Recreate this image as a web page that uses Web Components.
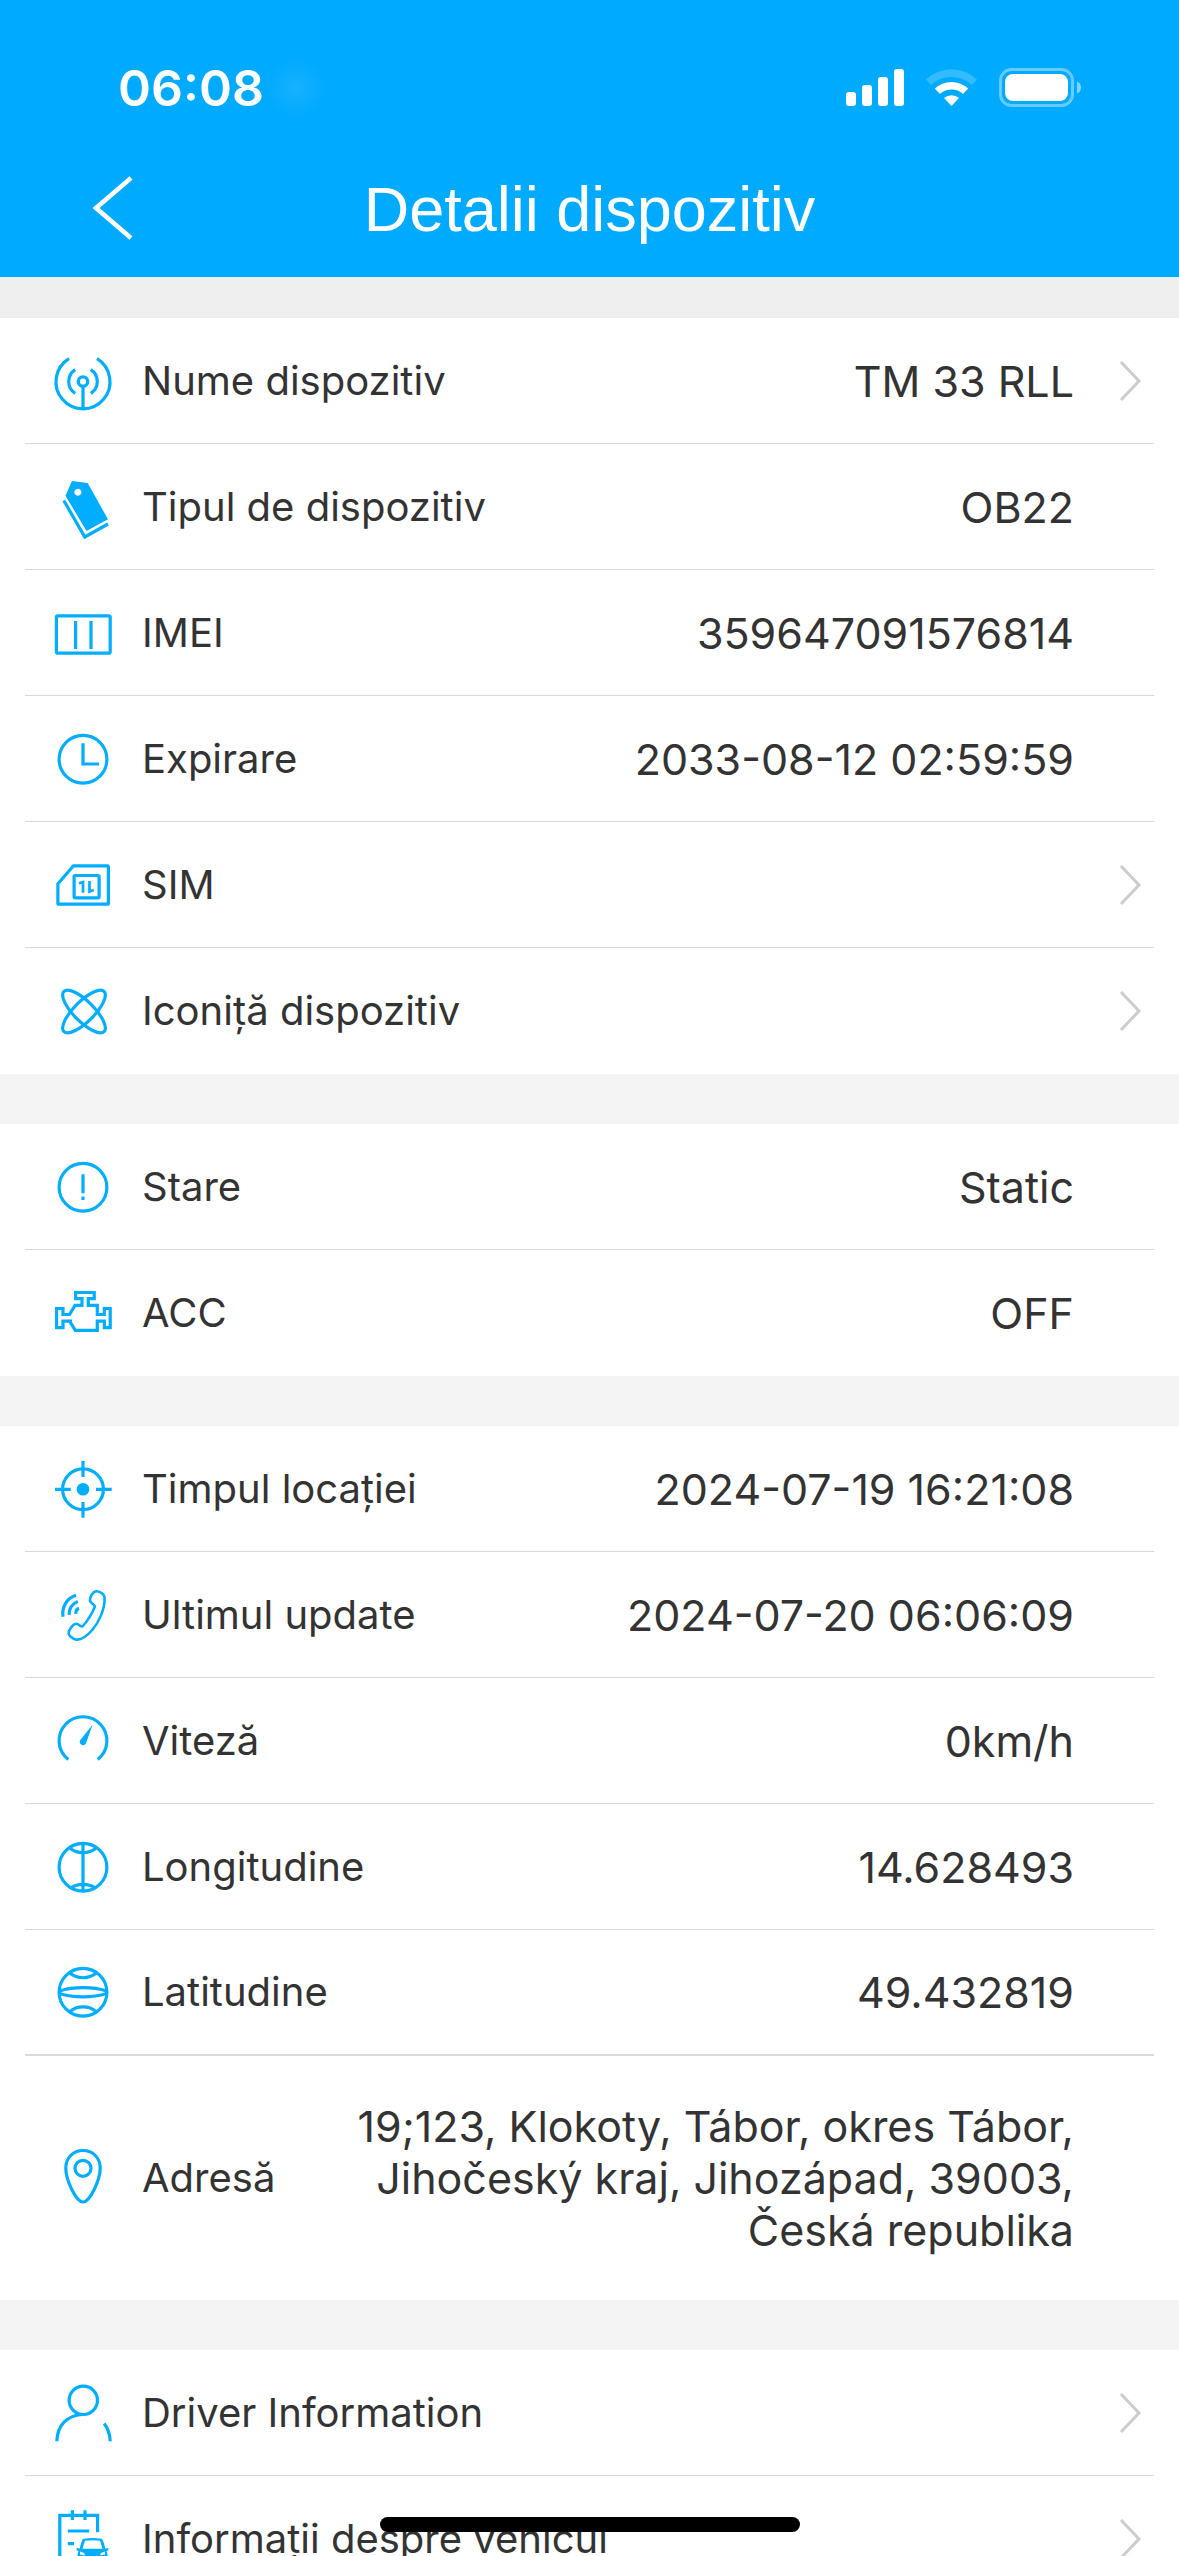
<!DOCTYPE html>
<html lang="ro">
<head>
<meta charset="utf-8">
<meta name="viewport" content="width=device-width, initial-scale=1">
<title>Detalii dispozitiv</title>
<style>
  html, body { margin: 0; height: 100%; }
  body { font-family: Inter, "Noto Sans", sans-serif; color: #333; background: #f4f4f4; }
</style>
</head>
<body>
<device-page>
  <status-bar slot="header" time="06:08"></status-bar>
  <nav-bar slot="header">Detalii dispozitiv</nav-bar>

  <row-group>
    <detail-row icon="antenna" href="#nume">Nume dispozitiv<span slot="value">TM 33 RLL</span></detail-row>
    <detail-row icon="tag">Tipul de dispozitiv<span slot="value">OB22</span></detail-row>
    <detail-row icon="imei">IMEI<span slot="value">359647091576814</span></detail-row>
    <detail-row icon="clock">Expirare<span slot="value">2033-08-12 02:59:59</span></detail-row>
    <detail-row icon="sim" href="#sim">SIM</detail-row>
    <detail-row icon="atom" href="#iconita">Iconiță dispozitiv</detail-row>
  </row-group>
  <row-group>
    <detail-row icon="alert">Stare<span slot="value">Static</span></detail-row>
    <detail-row icon="engine">ACC<span slot="value">OFF</span></detail-row>
  </row-group>
  <row-group>
    <detail-row icon="target">Timpul locației<span slot="value">2024-07-19 16:21:08</span></detail-row>
    <detail-row icon="phone">Ultimul update<span slot="value">2024-07-20 06:06:09</span></detail-row>
    <detail-row icon="gauge">Viteză<span slot="value">0km/h</span></detail-row>
    <detail-row icon="longitude">Longitudine<span slot="value">14.628493</span></detail-row>
    <detail-row icon="latitude" strong>Latitudine<span slot="value">49.432819</span></detail-row>
    <detail-row icon="pin" tall>Adresă<span slot="value">19;123, Klokoty, Tábor, okres Tábor, Jihočeský kraj, Jihozápad, 39003, Česká republika</span></detail-row>
  </row-group>
  <row-group>
    <detail-row icon="driver" href="#sofer">Driver Information</detail-row>
    <detail-row icon="vehicle" href="#vehicul">Informații despre vehicul</detail-row>
  </row-group>
</device-page>

<script>
const ICONS = {
  antenna: `<path d="M18 9.7a27 27 0 1 0 28 0M24.2 20.7a14 14 0 0 0 0 23.6M39.8 20.7a14 14 0 0 1 0 23.6M32 37.5V59"/><circle cx="32" cy="32.5" r="4.7"/>`,
  tag: `<path class="solid" fill-rule="evenodd" d="M20.9 6L36.7 8L57 44.3L35.5 56L14.5 20.7ZM26.9 13.8a3.5 3.5 0 1 0 .01 0Z"/><path d="M12.8 25.5L33.8 62L57 49"/>`,
  imei: `<rect x="5.4" y="14.8" width="53.8" height="37.4" rx="1.5"/><path d="M24.6 20V48M40 20V48"/>`,
  clock: `<circle cx="32" cy="32.3" r="23.9"/><path d="M32 16.3V37H48"/>`,
  sim: `<path d="M22.5 12.8H56.4a1 1 0 0 1 1 1V50.2a1 1 0 0 1 -1 1H7.9a1 1 0 0 1 -1-1V30.8Z"/><rect x="23.1" y="22.5" width="25" height="22.3" rx="1"/><path stroke-width="2.7" d="M28 30.2L32 29V39.8M38.5 28V38.5L42.8 37"/>`,
  atom: `<ellipse cx="33" cy="32.5" rx="28.4" ry="10.1" transform="rotate(45 33 32.5)"/><ellipse cx="33" cy="32.5" rx="28.4" ry="10.1" transform="rotate(-45 33 32.5)"/>`,
  alert: `<circle cx="32" cy="32.3" r="23.9"/><path d="M32 19.3V38.3M32 41.6V45"/>`,
  engine: `<path d="M24.6 11.5H43.2V17.6H37.3V24.4H46.3V33.5H53.3V27.5H59.2V46.6H53.3V40.2H46.3V49.3H24.3L19.5 41.5V40.2H12V46.6H5.6V27.5H12V33.5H18.5L24 24.4H31V17.6H24.6Z"/>`,
  target: `<circle cx="32" cy="32.3" r="20.4"/><circle class="solid" cx="32" cy="32.3" r="6.3"/><path d="M32 4V20M32 45V60.7M4 32.3H19.7M45 32.3H60.7"/>`,
  phone: `<path stroke-width="2.6" d="M45.7 8.2C49 8.5 53.6 11 53.6 15C54 26 48 39 41.2 47C36 53 30 57 25.4 56.6C21 56 17.3 52 17.6 50C18 46.5 22 41 25 40.8C28 40.5 29 44 31.5 43.4C36 39 42 29 43.8 23.6C43.5 21 39 20 38.9 17.5C38.8 14 42 8 45.7 8.2Z"/><path d="M25 12.3C16 15 10.5 24 12 33.8M26.8 18.5C21 20.5 17.8 26 18.2 31.8M28 25.3C26 26 24.6 28 24.8 30.8"/>`,
  gauge: `<path d="M17.3 50.5A23.9 23.9 0 1 1 46.7 50.5"/><path class="solid" d="M41.6 15.8L35.2 33.8A3.3 3.3 0 1 1 29.5 30.8Z"/>`,
  longitude: `<circle cx="32" cy="32.3" r="23.9"/><path d="M32 8.4V56.2M18.8 13C26 19.3 38 19.3 45.2 13M20 52.8C27 48.3 37 48.3 44 52.8"/>`,
  latitude: `<circle cx="32" cy="32.3" r="23.9"/><path d="M18.8 13C26 19.3 38 19.3 45.2 13M18.8 51.6C26 45.3 38 45.3 45.2 51.6M8.5 31C22 26.5 42 26.5 55.5 31M8.5 33.6C22 38 42 38 55.5 33.6"/>`,
  pin: `<path d="M32 4.5C22 4.5 14.8 12 14.8 22C14.8 34 25 56 32 56C39 56 49.2 34 49.2 22C49.2 12 42 4.5 32 4.5Z"/><circle cx="32" cy="22.3" r="8"/>`,
  driver: `<circle cx="32.3" cy="19.3" r="14.2"/><path d="M5.8 60.3C6.5 44 16 34.5 31 33.5M53.2 42.5C57 47.5 59 53.5 59.2 60.3"/>`,
  vehicle: `<path d="M34 62H8.8V8.3H46.6V25.3M21.4 3.3V13M34 3.3V13M16.8 24H38.2M16.8 36.7H23"/><path class="solid" fill-rule="evenodd" d="M32.5 31.8Q41.5 30 50.5 31.8Q52.5 33 54.2 41.5L57.4 41V43.3L55.5 44.2Q57 46.5 56.5 51V60H51V56H32V60H26.500V51Q26 46.500 27.500 44.200L25.600 43.300V41L28.800 41.500Q30.500 33 32.500 31.800ZM34 33.800L31.500 41.800H51.500L49 33.800Q41.500 32.500 34 33.800ZM29 44.500V47.500L34 48.500L33 46ZM54 44.500L50 46L49 48.500L54 47.500Z"/>`
};

const define = (name, html, setup) => {
  const template = document.createElement('template');
  template.innerHTML = html;
  customElements.define(name, class extends HTMLElement {
    constructor() {
      super();
      this.attachShadow({ mode: 'open' }).append(template.content.cloneNode(true));
    }
    connectedCallback() { if (setup) setup(this, this.shadowRoot); }
  });
};

define('line-icon', `
  <style>
    :host { display: block; flex: none; width: 64px; height: 64px; }
    svg { display: block; overflow: visible; fill: none; stroke: #00adff; stroke-width: 3.2; }
    .solid { fill: #00adff; stroke: none; }
  </style>
  <svg width="64" height="64" viewBox="0 0 64 64" aria-hidden="true"></svg>`,
  (el, root) => { root.querySelector('svg').innerHTML = ICONS[el.getAttribute('name')] || ''; });

define('status-bar', `
  <style>
    :host { display: flex; align-items: center; justify-content: space-between; height: 102px; padding: 37px 97px 0 118px; color: #fff; }
    .left { display: flex; align-items: center; gap: 2px; }
    time { font-size: 50px; line-height: 60px; font-weight: 600; }
    .glow { width: 60px; height: 60px; background: radial-gradient(closest-side, #18b1ff, #00aaff); }
    svg { display: block; }
  </style>
  <div class="left"><time></time><span class="glow"></span></div>
  <svg width="236" height="40" viewBox="846 68 236 40" fill="#fff" role="img" aria-label="Semnal, Wi-Fi, baterie">
    <rect x="846" y="92" width="10" height="14" rx="3"/><rect x="862" y="85" width="10" height="21" rx="3"/>
    <rect x="878" y="77" width="10" height="29" rx="3"/><rect x="894" y="69" width="10" height="37" rx="3"/>
    <path opacity=".2" d="M926 79.5A37 37 0 0 1 977 79.5L971.8 85A29.5 29.5 0 0 0 931.2 85Z"/>
    <path d="M934.8 88.5A24.5 24.5 0 0 1 968.2 88.5L963 94A17 17 0 0 0 940 94Z"/>
    <path d="M944 98A11.5 11.5 0 0 1 959 98L951.5 106Z"/>
    <rect x="1000.5" y="69.5" width="72" height="36" rx="11" fill="none" stroke="#fff" stroke-width="3" opacity=".4"/>
    <rect x="1005" y="74" width="63" height="27" rx="8"/>
    <path opacity=".5" d="M1077 81.5Q1081 83 1081 87.5Q1081 92 1077 93.5Z"/>
  </svg>`,
  (el, root) => { root.querySelector('time').textContent = el.getAttribute('time'); });

define('nav-bar', `
  <style>
    :host { display: grid; grid-template-columns: 92px 1fr 92px; align-items: center; height: 138px; padding: 0 67px; color: #fff; }
    button { display: flex; align-items: center; justify-content: center; height: 92px; padding: 0; border: 0; background: none; color: inherit; }
    h1 { margin: 0; padding-top: 2px; font: 400 63px/76px "Liberation Sans", Arial, sans-serif; text-align: center; }
  </style>
  <button type="button" aria-label="Înapoi">
    <svg width="40" height="64" viewBox="0 0 40 64" fill="none" stroke="#fff" stroke-width="4.5"><path d="M38 2L3 32L38 62"/></svg>
  </button>
  <h1><slot></slot></h1>`);

define('row-group', `
  <style>
    :host { display: block; background: #fff; }
    ::slotted(:last-child) { --rule: 0px; }
  </style>
  <slot></slot>`);

define('detail-row', `
  <style>
    :host { display: block; padding: 0 25px; }
    .row { display: flex; align-items: center; box-sizing: border-box; min-height: 126px; padding: 0 13px 0 26px;
           border-bottom: var(--rule, 1px) solid #d9d9d9; color: inherit; text-decoration: none; }
    :host([strong]) .row { border-bottom-width: 2px; }
    .label { margin-left: 27px; font-size: 40px; line-height: 52px; white-space: nowrap; }
    .value { flex: 1; padding-left: 80px; font-size: 43px; line-height: 52px; text-align: right; }
    :host([tall]) .value { padding-top: 44px; padding-bottom: 44px; }
    .end { flex: none; width: 21px; margin-left: 46px; }
    svg { display: block; overflow: visible; }
  </style>`,
  (el, root) => {
    const href = el.getAttribute('href');
    const row = document.createElement(href ? 'a' : 'div');
    row.className = 'row';
    if (href) row.href = href;
    row.innerHTML = `
      <line-icon name="${el.getAttribute('icon')}"></line-icon>
      <span class="label"><slot></slot></span>
      <span class="value"><slot name="value"></slot></span>
      <span class="end">${href ? '<svg width="21" height="40" viewBox="0 0 21 40" fill="none" stroke="#ccc" stroke-width="3" aria-hidden="true"><path d="M1 1L19 20L1 39"/></svg>' : ''}</span>`;
    root.append(row);
  });

define('device-page', `
  <style>
    :host { display: flex; flex-direction: column; height: 100vh; overflow: hidden; }
    header { flex: none; background: #00aaff; border-bottom: 41px solid #efefef; }
    main { flex: 1; min-height: 0; display: flex; flex-direction: column; gap: 50px; overflow-y: auto; scrollbar-width: none; }
    ::slotted(row-group) { flex: none; }
    .home { position: fixed; left: 0; right: 0; bottom: 24px; width: 420px; height: 15px; margin: auto; border-radius: 8px; background: #000; }
  </style>
  <header><slot name="header"></slot></header>
  <main><slot></slot></main>
  <div class="home"></div>`);
</script>
</body>
</html>
